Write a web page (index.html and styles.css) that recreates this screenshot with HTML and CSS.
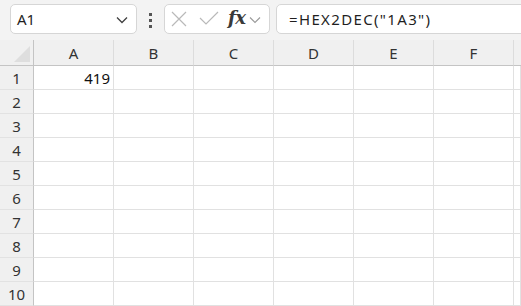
FILE: index.html
```html
<!DOCTYPE html>
<html>
<head>
<meta charset="utf-8">
<link rel="stylesheet" href="styles.css">
</head>
<body>
<div class="toolbar">
  <div class="namebox">
    <span class="name">A1</span>
    <svg class="chev" width="12" height="8" viewBox="0 0 12 8"><polyline points="1,1.5 6,6.5 11,1.5" fill="none" stroke="#404040" stroke-width="1.3"/></svg>
  </div>
  <div class="grip"><i></i><i></i><i></i></div>
  <div class="fxbox">
    <svg class="ico" width="18" height="18" viewBox="0 0 18 18"><path d="M2 2 L16 16 M16 2 L2 16" stroke="#b9b9b9" stroke-width="1.2" fill="none"/></svg>
    <svg class="ico" width="20" height="18" viewBox="0 0 20 18"><polyline points="1,8 7,14 19,2" stroke="#b9b9b9" stroke-width="1.2" fill="none"/></svg>
    <span class="fx">fx</span>
    <svg class="chev2" width="12" height="8" viewBox="0 0 12 8"><polyline points="1,1.5 6,6.5 11,1.5" fill="none" stroke="#9a9a9a" stroke-width="1.1"/></svg>
  </div>
  <div class="formula">=HEX2DEC("1A3")</div>
</div>
<div class="sheet">
  <div class="corner"><svg width="34" height="26" viewBox="0 0 34 26"><polygon points="14,22 30,22 30,6" fill="#dedede"/></svg></div>
  <div class="ch">A</div><div class="ch">B</div><div class="ch">C</div><div class="ch">D</div><div class="ch">E</div><div class="ch">F</div><div class="ch last"></div>

  <div class="rh">1</div><div class="c num">419</div><div class="c"></div><div class="c"></div><div class="c"></div><div class="c"></div><div class="c"></div><div class="c"></div>
  <div class="rh">2</div><div class="c"></div><div class="c"></div><div class="c"></div><div class="c"></div><div class="c"></div><div class="c"></div><div class="c"></div>
  <div class="rh">3</div><div class="c"></div><div class="c"></div><div class="c"></div><div class="c"></div><div class="c"></div><div class="c"></div><div class="c"></div>
  <div class="rh">4</div><div class="c"></div><div class="c"></div><div class="c"></div><div class="c"></div><div class="c"></div><div class="c"></div><div class="c"></div>
  <div class="rh">5</div><div class="c"></div><div class="c"></div><div class="c"></div><div class="c"></div><div class="c"></div><div class="c"></div><div class="c"></div>
  <div class="rh">6</div><div class="c"></div><div class="c"></div><div class="c"></div><div class="c"></div><div class="c"></div><div class="c"></div><div class="c"></div>
  <div class="rh">7</div><div class="c"></div><div class="c"></div><div class="c"></div><div class="c"></div><div class="c"></div><div class="c"></div><div class="c"></div>
  <div class="rh">8</div><div class="c"></div><div class="c"></div><div class="c"></div><div class="c"></div><div class="c"></div><div class="c"></div><div class="c"></div>
  <div class="rh">9</div><div class="c"></div><div class="c"></div><div class="c"></div><div class="c"></div><div class="c"></div><div class="c"></div><div class="c"></div>
  <div class="rh">10</div><div class="c"></div><div class="c"></div><div class="c"></div><div class="c"></div><div class="c"></div><div class="c"></div><div class="c"></div>
</div>
</body>
</html>
```
FILE: styles.css
```css
html, body {
  margin: 0;
  padding: 0;
  background: #f3f3f3;
  overflow: hidden;
  width: 521px;
  height: 306px;
  font-family: "Noto Sans", "Open Sans", sans-serif;
  color: #222;
}
.toolbar {
  height: 40px;
  box-sizing: border-box;
  padding: 4px 0 0 10px;
  display: flex;
  align-items: flex-start;
  width: 540px;
}
.namebox, .fxbox, .formula {
  height: 30px;
  box-sizing: border-box;
  background: #fff;
  border: 1px solid #d6d6d6;
  border-radius: 5px;
  display: flex;
  align-items: center;
}
.namebox {
  width: 127px;
  padding: 0 8px 0 6px;
  justify-content: space-between;
}
.name {
  font-size: 15px;
  color: #1f1f1f;
}
.chev { display: block; margin-top: 1px; }
.grip {
  width: 27px;
  display: flex;
  flex-direction: column;
  align-items: center;
  gap: 3px;
  padding-top: 9px;
}
.grip i {
  display: block;
  width: 3px;
  height: 3px;
  background: #555;
}
.fxbox {
  width: 106px;
  padding-left: 5px;
  gap: 8px;
}
.ico { display: block; }
.fxbox .ico:nth-child(2) { margin-left: 3px; }
.fx {
  font-family: "DejaVu Serif", serif;
  font-style: italic;
  font-weight: bold;
  font-size: 18px;
  color: #3a3a3a;
  margin-left: 1px;
  letter-spacing: -0.5px;
  line-height: 1;
  margin-top: -3px;
}
.chev2 { display: block; margin-left: -4px; margin-top: 1px; }
.formula {
  flex: 1;
  margin-left: 6px;
  padding-left: 12px;
  font-size: 15px;
  color: #1f1f1f;
  letter-spacing: 1.35px;
}
.sheet {
  display: grid;
  grid-template-columns: 34px repeat(6, 80px) 1fr;
  grid-template-rows: 26px repeat(10, 24px);
  background: #fff;
}
.corner {
  background: #f0f0f0;
  border-right: 1px solid #c4c4c4;
  border-bottom: 1px solid #c4c4c4;
  box-sizing: border-box;
}
.corner svg { display: block; }
.ch {
  background: #f0f0f0;
  border-right: 1px solid #dcdcdc;
  border-bottom: 1px solid #c4c4c4;
  box-sizing: border-box;
  display: flex;
  align-items: center;
  justify-content: center;
  font-size: 15px;
  color: #333;
}
.ch.last { border-right: none; }
.rh {
  background: #f0f0f0;
  border-right: 1px solid #c4c4c4;
  border-bottom: 1px solid #e2e2e2;
  box-sizing: border-box;
  display: flex;
  align-items: center;
  justify-content: center;
  font-size: 15px;
  color: #333;
}
.c {
  border-right: 1px solid #e1e1e1;
  border-bottom: 1px solid #e1e1e1;
  box-sizing: border-box;
  font-size: 15px;
  color: #111;
  display: flex;
  align-items: center;
}
.c.num {
  justify-content: flex-end;
  padding-right: 3px;
}
```
